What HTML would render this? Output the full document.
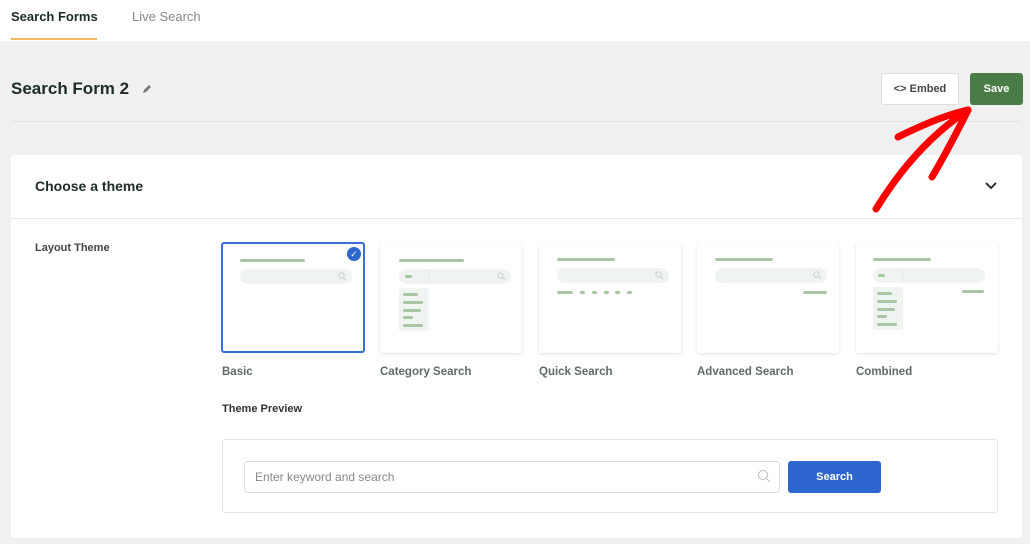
<!DOCTYPE html>
<html><head><style>
*{margin:0;padding:0;box-sizing:border-box}
body{width:1030px;height:544px;background:#f0f0f0;font-family:"Liberation Sans",sans-serif;position:relative;overflow:hidden;color:#1d2b2a}
.a{position:absolute}
.card{position:absolute;top:243px;width:142px;height:110px;background:#fff;border-radius:3px;box-shadow:0 1px 3px rgba(0,0,0,.13)}
.bar{position:absolute;height:3px;background:#a8c6a4;border-radius:2px}
.pill{position:absolute;left:18px;top:26px;width:112px;height:15px;background:#eff4f0;border-radius:8px}
.lbl{position:absolute;top:366px;font-size:11.5px;font-weight:bold;color:#5f6b6a}
.dd{position:absolute;left:18px;top:45px;width:30px;height:43px;background:#eff4f0;border-radius:2px}
.mg{position:absolute;right:5px;top:3px}
</style></head><body>
<div class="a" style="left:0;top:0;width:1030px;height:41px;background:#fff"></div>
<div class="a" style="left:11px;top:9px;font-size:13px;font-weight:bold">Search Forms</div>
<div class="a" style="left:132px;top:9px;font-size:13px;color:#888">Live Search</div>
<div class="a" style="left:11px;top:38px;width:86px;height:2px;background:#f0b860"></div>
<div class="a" style="left:11px;top:79px;font-size:17px;font-weight:bold">Search Form 2</div>
<svg class="a" style="left:141px;top:83px" width="12" height="12" viewBox="0 0 12 12"><path d="M2 10 L3 7 L8 2 L10 4 L5 9 Z" fill="#777"/></svg>
<div class="a" style="left:11px;top:121px;width:1010px;height:1px;background:#e2e2e2"></div>
<div class="a" style="left:881px;top:73px;width:78px;height:32px;background:#fff;border:1px solid #ddd;border-radius:3px;font-size:11px;font-weight:bold;color:#444;line-height:30px;text-align:center">&lt;&gt; Embed</div>
<div class="a" style="left:970px;top:73px;width:53px;height:32px;background:#4a7d45;border-radius:3px;font-size:11px;font-weight:bold;color:#fff;line-height:32px;text-align:center">Save</div>
<div class="a" style="left:11px;top:155px;width:1011px;height:383px;background:#fff;border-radius:3px"></div>
<div class="a" style="left:35px;top:178px;font-size:14px;font-weight:bold">Choose a theme</div>
<svg class="a" style="left:984px;top:181px" width="14" height="10"><path d="M2 2 L7 7 L12 2" stroke="#333" stroke-width="2" fill="none"/></svg>
<div class="a" style="left:11px;top:218px;width:1011px;height:1px;background:#e6e6e6"></div>
<div class="a" style="left:35px;top:242px;font-size:11px;font-weight:bold;color:#444">Layout Theme</div>

<div class="card" style="left:221px;top:242px;width:144px;height:111px;border:2px solid #3a6fd6;box-shadow:none">
 <div class="bar" style="left:17px;top:15px;width:65px"></div><div class="pill" style="left:17px;top:25px"><svg class="mg" width="9" height="9"><circle cx="3.5" cy="3.5" r="2.7" stroke="#c8d2c8" fill="none"/><path d="M5.5 5.5L8 8" stroke="#c8d2c8"/></svg></div>
 <div class="a" style="left:124px;top:3px;width:14px;height:14px;border-radius:50%;background:#2d66cf;color:#fff;font-size:9px;text-align:center;line-height:14px">✓</div>
</div>
<div class="card" style="left:380px">
 <div class="bar" style="left:19px;top:16px;width:65px"></div><div class="pill" style="left:19px;top:26px"><svg class="mg" width="9" height="9"><circle cx="3.5" cy="3.5" r="2.7" stroke="#c8d2c8" fill="none"/><path d="M5.5 5.5L8 8" stroke="#c8d2c8"/></svg></div>
 <div class="a" style="left:48px;top:27px;width:1px;height:13px;background:#e2e8e2"></div>
 <div class="bar" style="left:25px;top:32px;width:7px"></div>
 <div class="dd" style="left:19px"><div class="bar" style="left:4px;top:5px;width:15px"></div><div class="bar" style="left:4px;top:13px;width:20px"></div><div class="bar" style="left:4px;top:21px;width:18px"></div><div class="bar" style="left:4px;top:28px;width:10px"></div><div class="bar" style="left:4px;top:36px;width:20px"></div></div>
</div>
<div class="card" style="left:539px">
 <div class="bar" style="left:18px;top:15px;width:58px"></div><div class="pill" style="left:18px;top:25px"><svg class="mg" width="9" height="9"><circle cx="3.5" cy="3.5" r="2.7" stroke="#c8d2c8" fill="none"/><path d="M5.5 5.5L8 8" stroke="#c8d2c8"/></svg></div>
 <div class="bar" style="left:18px;top:48px;width:16px"></div>
 <div class="bar" style="left:41px;top:48px;width:5px"></div><div class="bar" style="left:53px;top:48px;width:5px"></div><div class="bar" style="left:65px;top:48px;width:5px"></div><div class="bar" style="left:76px;top:48px;width:5px"></div><div class="bar" style="left:88px;top:48px;width:5px"></div>
</div>
<div class="card" style="left:697px">
 <div class="bar" style="left:18px;top:15px;width:58px"></div><div class="pill" style="left:18px;top:25px"><svg class="mg" width="9" height="9"><circle cx="3.5" cy="3.5" r="2.7" stroke="#c8d2c8" fill="none"/><path d="M5.5 5.5L8 8" stroke="#c8d2c8"/></svg></div>
 <div class="bar" style="left:106px;top:48px;width:24px"></div>
</div>
<div class="card" style="left:856px">
 <div class="bar" style="left:17px;top:15px;width:58px"></div><div class="pill" style="left:17px;top:25px;width:112px"></div>
 <div class="a" style="left:46px;top:26px;width:1px;height:13px;background:#e2e8e2"></div>
 <div class="bar" style="left:22px;top:31px;width:7px"></div>
 <div class="dd" style="left:17px;top:44px"><div class="bar" style="left:4px;top:5px;width:15px"></div><div class="bar" style="left:4px;top:13px;width:20px"></div><div class="bar" style="left:4px;top:21px;width:18px"></div><div class="bar" style="left:4px;top:28px;width:10px"></div><div class="bar" style="left:4px;top:36px;width:20px"></div></div>
 <div class="bar" style="left:106px;top:47px;width:22px"></div>
</div>
<div class="lbl" style="left:222px">Basic</div>
<div class="lbl" style="left:380px">Category Search</div>
<div class="lbl" style="left:539px">Quick Search</div>
<div class="lbl" style="left:697px">Advanced Search</div>
<div class="lbl" style="left:856px">Combined</div>
<div class="a" style="left:222px;top:403px;font-size:11px;font-weight:bold;color:#333">Theme Preview</div>
<div class="a" style="left:222px;top:439px;width:776px;height:74px;border:1px solid #e6e6e6;border-radius:3px"></div>
<div class="a" style="left:244px;top:461px;width:536px;height:32px;border:1px solid #ddd;border-radius:3px;font-size:12px;color:#888;line-height:30px;padding-left:10px">Enter keyword and search</div>
<svg class="a" style="left:757px;top:469px" width="14" height="14"><circle cx="6" cy="6" r="4.5" stroke="#bbb" fill="none"/><path d="M9.5 9.5 L13 13" stroke="#bbb"/></svg>
<div class="a" style="left:788px;top:461px;width:93px;height:32px;background:#2d66cf;border-radius:3px;color:#fff;font-size:11px;font-weight:bold;line-height:32px;text-align:center">Search</div>
<svg class="a" style="left:0;top:0" width="1030" height="544"><g stroke="#f00" stroke-width="7" stroke-linecap="round" fill="none"><path d="M876 209 C900 170 930 135 968 110"/><path d="M898 137 C920 126 945 115 968 110"/><path d="M932 177 C945 155 958 130 968 110"/></g></svg>
</body></html>
